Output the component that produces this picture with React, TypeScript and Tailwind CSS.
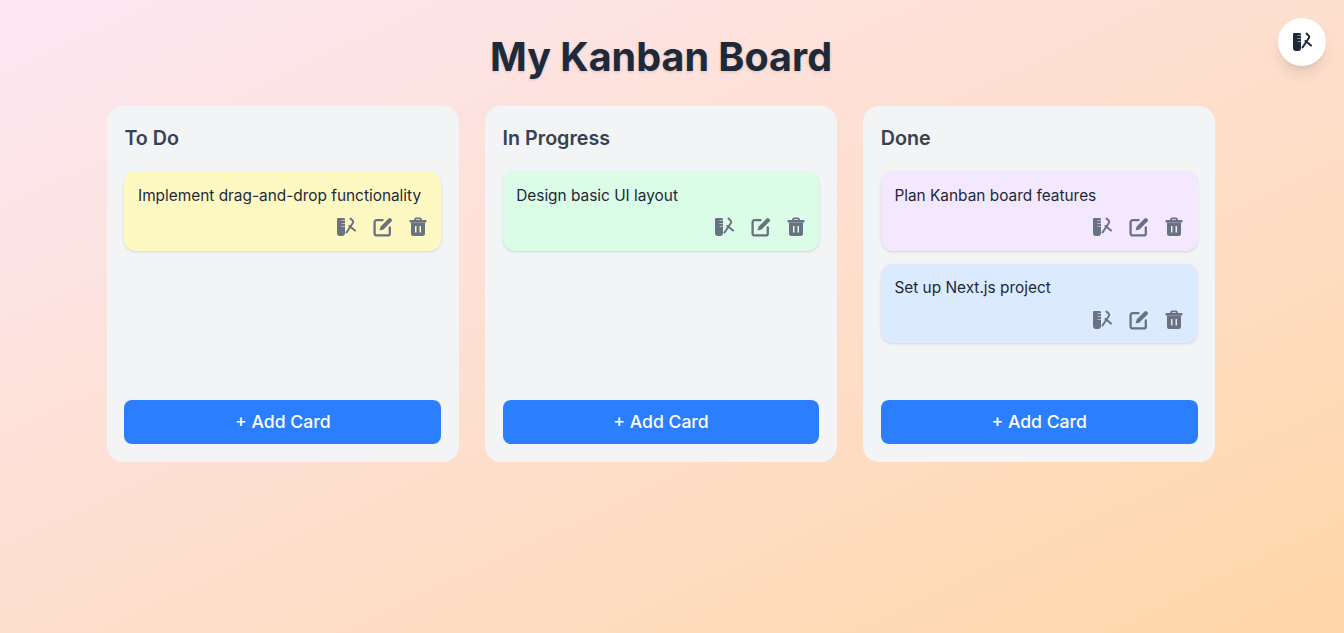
function Tool({ className }: { className: string }) {
  return (
    <svg viewBox="0 0 20 20" className={className} fill="none">
      <path d="M1 2.200A1.200 1.200 0 0 1 2.200 1h5.400A1.400 1.400 0 0 1 9 2.400V16a3 3 0 0 1-3 3H4a3 3 0 0 1-3-3z" fill="currentColor" />
      <path d="M5.500 3.500H9M5.500 6.500H9M5.500 9.500H9" stroke="#ffffff" strokeOpacity="0.5" strokeWidth="1.200" />
      <path d="M10.500 15.500 17 5.800c.5-.9.2-1.700-.5-2.400L14.500 1.600" stroke="currentColor" strokeWidth="2" strokeLinecap="round" strokeLinejoin="round" />
      <path d="M13.500 9 19 13.500" stroke="currentColor" strokeWidth="2" strokeLinecap="round" />
    </svg>
  );
}

function Edit({ className }: { className: string }) {
  return (
    <svg viewBox="-1 0 20 20" className={className} fill="none">
      <path d="M9.500 3.200H3.600A2 2 0 0 0 1.600 5.200v11.200a2 2 0 0 0 2 2h11.200a2 2 0 0 0 2-2v-5.900" stroke="currentColor" strokeWidth="2.300" strokeLinecap="round" />
      <path d="M15.600 1.600a1.600 1.600 0 0 1 2.300 0l.6.6a1.600 1.600 0 0 1 0 2.300l-8 8-3.900 1 1-3.900z" fill="currentColor" />
    </svg>
  );
}

function Trash({ className }: { className: string }) {
  return (
    <svg viewBox="0 0 20 20" className={className} fill="none">
      <path d="M7 3.200V2.600A1.300 1.300 0 0 1 8.300 1.300h3.400A1.300 1.300 0 0 1 13 2.600v.6" stroke="currentColor" strokeWidth="1.800" />
      <path d="M2.400 3h15.200a.9.9 0 0 1 .9.9v.8a.9.9 0 0 1-.9.9H2.400a.9.9 0 0 1-.9-.9v-.8a.9.9 0 0 1 .9-.9z" fill="currentColor" />
      <path fillRule="evenodd" clipRule="evenodd" d="M3 5.500h14v11.300a2.200 2.200 0 0 1-2.200 2.200H5.200A2.200 2.200 0 0 1 3 16.800zM7 9v6.500h1.500V9zm4.500 0v6.500H13V9z" fill="currentColor" />
    </svg>
  );
}

const columns = [
  { title: "To Do", cards: [{ text: "Implement drag-and-drop functionality", color: "bg-yellow-100" }] },
  { title: "In Progress", cards: [{ text: "Design basic UI layout", color: "bg-green-100" }] },
  {
    title: "Done",
    cards: [
      { text: "Plan Kanban board features", color: "bg-purple-100" },
      { text: "Set up Next.js project", color: "bg-blue-100" },
    ],
  },
];

export default function App() {
  return (
    <div className="relative min-h-[633px] bg-gradient-to-br from-pink-100 to-orange-200 pr-[22px] pt-8 font-['Inter',sans-serif]">
      <button className="absolute right-[18px] top-[18px] flex h-12 w-12 items-center justify-center rounded-full bg-white shadow-lg">
        <Tool className="h-5 w-5 text-gray-800" />
      </button>
      <h1 className="mb-6 text-center text-[39.5px] font-bold leading-[50px] text-gray-800 [text-shadow:0_1px_3px_rgba(0,0,0,0.15)]">
        My Kanban Board
      </h1>
      <div className="flex justify-center gap-[26.2px]">
        {columns.map((col) => (
          <div key={col.title} className="flex h-[356px] w-[352px] flex-col rounded-2xl bg-gray-100 p-[17.6px]">
            <h2 className="mb-[18.6px] h-[29px] text-[19.7px] font-semibold leading-[29px] text-gray-700">{col.title}</h2>
            <div className="flex flex-1 flex-col gap-[12.8px]">
              {col.cards.map((card) => (
                <div key={card.text} className={`h-[79.6px] rounded-xl px-[13.6px] pt-[14.6px] shadow-sm ${card.color}`}>
                  <p className="h-5 text-[15.4px] leading-5 text-gray-800">{card.text}</p>
                  <div className="mt-[11.4px] flex justify-end gap-[16px] text-gray-500">
                    <Tool className="h-5 w-5" />
                    <Edit className="h-5 w-5" />
                    <Trash className="h-5 w-5" />
                  </div>
                </div>
              ))}
            </div>
            <button className="h-11 rounded-lg bg-blue-500 text-[17.6px] font-medium text-white">+ Add Card</button>
          </div>
        ))}
      </div>
    </div>
  );
}
